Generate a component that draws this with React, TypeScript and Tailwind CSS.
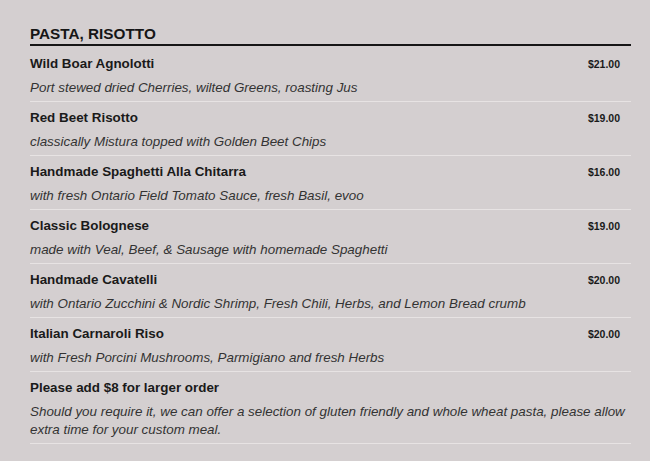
import React from 'react';

interface MenuItem {
  name: string;
  desc: string;
  price?: string;
}

const items: MenuItem[] = [
  { name: 'Wild Boar Agnolotti', desc: 'Port stewed dried Cherries, wilted Greens, roasting Jus', price: '$21.00' },
  { name: 'Red Beet Risotto', desc: 'classically Mistura topped with Golden Beet Chips', price: '$19.00' },
  { name: 'Handmade Spaghetti Alla Chitarra', desc: 'with fresh Ontario Field Tomato Sauce, fresh Basil, evoo', price: '$16.00' },
  { name: 'Classic Bolognese', desc: 'made with Veal, Beef, & Sausage with homemade Spaghetti', price: '$19.00' },
  { name: 'Handmade Cavatelli', desc: 'with Ontario Zucchini & Nordic Shrimp, Fresh Chili, Herbs, and Lemon Bread crumb', price: '$20.00' },
  { name: 'Italian Carnaroli Riso', desc: 'with Fresh Porcini Mushrooms, Parmigiano and fresh Herbs', price: '$20.00' },
  {
    name: 'Please add $8 for larger order',
    desc: 'Should you require it, we can offer a selection of gluten friendly and whole wheat pasta, please allow extra time for your custom meal.',
  },
];

export default function App() {
  return (
    <div className="min-h-[461px] w-[650px] bg-[#d4cfd0] pl-[30px] pt-[24px] font-['Liberation_Sans',Arial,sans-serif]">
      <div className="w-[601px]">
        {/* Section heading */}
        <h2 className="border-b-2 border-[#161616] text-[15.3px] leading-[20px] font-bold text-[#161616]">
          PASTA, RISOTTO
        </h2>

        {items.map((item, i) => (
          <div
            key={item.name}
            className={`border-b border-[#e7e3e3] pb-[4px] ${i === 0 ? 'pt-[9px]' : 'pt-[7px]'}`}
          >
            <div className="flex items-baseline justify-between pr-[11px]">
              <span className="text-[13.4px] leading-[18px] font-bold text-[#1a1a1a]">{item.name}</span>
              {item.price && (
                <span className="text-[10.5px] leading-[18px] font-bold text-[#1a1a1a]">{item.price}</span>
              )}
            </div>
            <p className="mt-[6px] text-[13.4px] leading-[18px] italic text-[#333]">{item.desc}</p>
          </div>
        ))}
      </div>
    </div>
  );
}
